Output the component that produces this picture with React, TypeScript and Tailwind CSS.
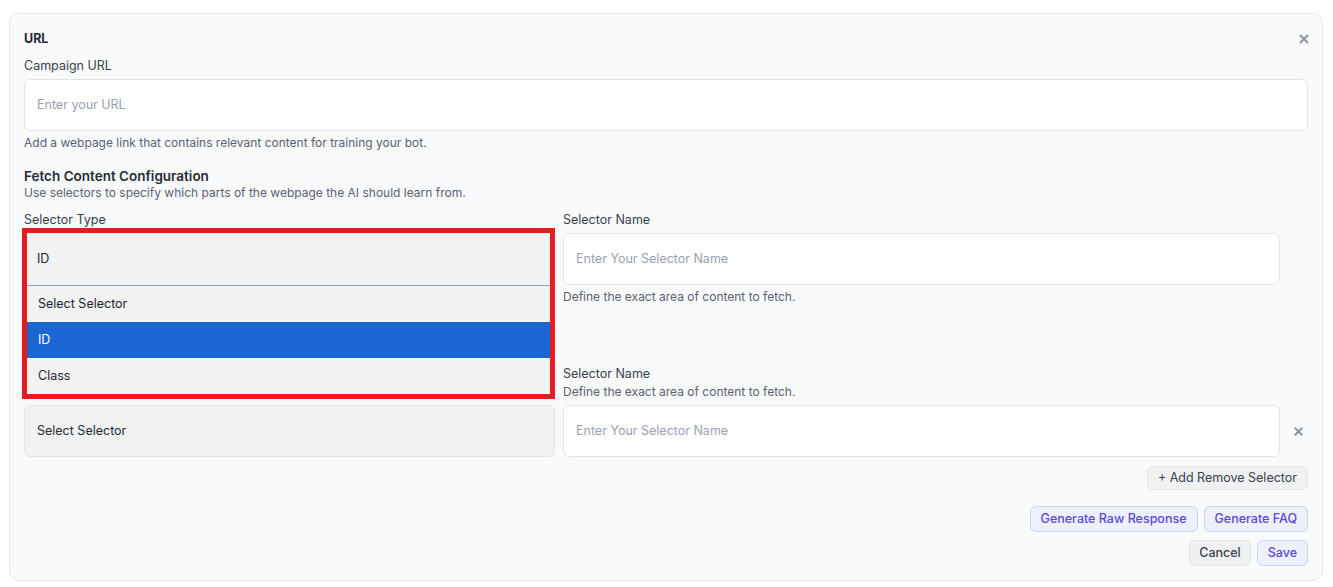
import { X } from "lucide-react";

function Label({ children }: { children: React.ReactNode }) {
  return <p className="text-[12.5px] leading-4 text-[#3b3f4a]">{children}</p>;
}

function Help({ children }: { children: React.ReactNode }) {
  return <p className="text-[12px] leading-4 text-[#5b6170]">{children}</p>;
}

function TextInput({ placeholder }: { placeholder: string }) {
  return (
    <div className="flex h-[52px] w-full items-center rounded-md border border-[#e1e5ee] bg-white px-3">
      <span className="text-[12.5px] text-[#9aa1b1]">{placeholder}</span>
    </div>
  );
}

export default function App() {
  return (
    <div
      className="min-h-[587px] bg-white pl-[9px] pr-[10px] pt-[13px]"
      style={{ fontFamily: "Inter, 'Noto Sans', sans-serif" }}
    >
      <div className="relative rounded-[10px] border border-[#e2e6ee] bg-[#f9fafc] px-[14px] pb-[14px] pt-[17px]">
        <button className="absolute right-[11px] top-[18px] text-[#8a93a6]">
          <X size={14} strokeWidth={3.5} />
        </button>

        <h2 className="text-[12.5px] font-bold leading-4 text-[#262a33]">URL</h2>
        <div className="mt-[11px]">
          <Label>Campaign URL</Label>
        </div>
        <div className="mt-[5px]">
          <TextInput placeholder="Enter your URL" />
        </div>
        <div className="mt-[4px]">
          <Help>Add a webpage link that contains relevant content for training your bot.</Help>
        </div>

        <h3 className="mt-[17px] text-[13.5px] font-semibold leading-4 text-[#262a33]">
          Fetch Content Configuration
        </h3>
        <div className="mt-px">
          <Help>Use selectors to specify which parts of the webpage the AI should learn from.</Help>
        </div>

        {/* row 1 */}
        <div className="mt-[11px] flex gap-2">
          <div className="relative w-[531px] shrink-0">
            <Label>Selector Type</Label>
            <div className="mt-[5px] flex h-[52px] items-center rounded-md border border-[#e1e5ee] bg-[#f1f2f3] px-3">
              <span className="text-[12.5px] text-[#262a33]">ID</span>
            </div>

            {/* open dropdown */}
            <div className="absolute left-[-2px] top-[16px] z-10 w-[533px] border-[5px] border-[#e41c1f]">
              <div className="flex h-[53px] items-center border-b border-[#8f9ad6] bg-[#f1f2f2] pl-[10px]">
                <span className="text-[12.5px] text-[#1f2330]">ID</span>
              </div>
              <div className="flex h-[36px] items-center bg-[#f1f2f2] pl-[11px] text-[12.5px] text-[#1f2330]">
                Select Selector
              </div>
              <div className="flex h-[36px] items-center bg-[#1a66d2] pl-[11px] text-[12.5px] text-white">
                ID
              </div>
              <div className="flex h-[36px] items-center bg-[#f1f2f2] pl-[11px] text-[12.5px] text-[#1f2330]">
                Class
              </div>
            </div>
          </div>
          <div className="flex-1">
            <Label>Selector Name</Label>
            <div className="mt-[5px]">
              <TextInput placeholder="Enter Your Selector Name" />
            </div>
            <div className="mt-[4px]">
              <Help>Define the exact area of content to fetch.</Help>
            </div>
          </div>
          <div className="w-[20px] shrink-0" />
        </div>

        {/* row 2 */}
        <div className="mt-[61px] flex items-end gap-2">
          <div className="w-[531px] shrink-0">
            <Label>Selector Type</Label>
            <div className="mt-[5px] flex h-[52px] items-center rounded-md border border-[#e1e5ee] bg-[#f1f2f3] px-3">
              <span className="text-[12.5px] text-[#262a33]">Select Selector</span>
            </div>
          </div>
          <div className="flex-1">
            <Label>Selector Name</Label>
            <div className="mt-[2px]">
              <Help>Define the exact area of content to fetch.</Help>
            </div>
            <div className="mt-[5px]">
              <TextInput placeholder="Enter Your Selector Name" />
            </div>
          </div>
          <div className="flex h-[52px] w-[20px] shrink-0 items-center justify-center text-[#8a93a6]">
            <X size={13} strokeWidth={3.5} />
          </div>
        </div>

        <div className="mt-[9px] flex justify-end">
          <button className="h-[24px] rounded-md border border-[#e1e4ea] bg-[#f0f1f3] px-[10px] text-[12.5px] text-[#3b3f4a]">
            + Add Remove Selector
          </button>
        </div>

        <div className="mt-[16px] flex justify-end gap-[6px]">
          <button className="h-[26px] rounded-md border border-[#cfd3fb] bg-[#eef0fe] px-[10px] text-[12.5px] font-medium text-[#5a48e0]">
            Generate Raw Response
          </button>
          <button className="h-[26px] rounded-md border border-[#cfd3fb] bg-[#eef0fe] px-[10px] text-[12.5px] font-medium text-[#5a48e0]">
            Generate FAQ
          </button>
        </div>

        <div className="mt-[8px] flex justify-end gap-[6px]">
          <button className="h-[26px] rounded-md border border-[#e1e4ea] bg-[#f0f1f3] px-[9px] text-[12.5px] font-medium text-[#3b3f4a]">
            Cancel
          </button>
          <button className="h-[26px] rounded-md border border-[#cfd3fb] bg-[#eef0fe] px-[10px] text-[12.5px] font-medium text-[#5a48e0]">
            Save
          </button>
        </div>
      </div>
    </div>
  );
}
